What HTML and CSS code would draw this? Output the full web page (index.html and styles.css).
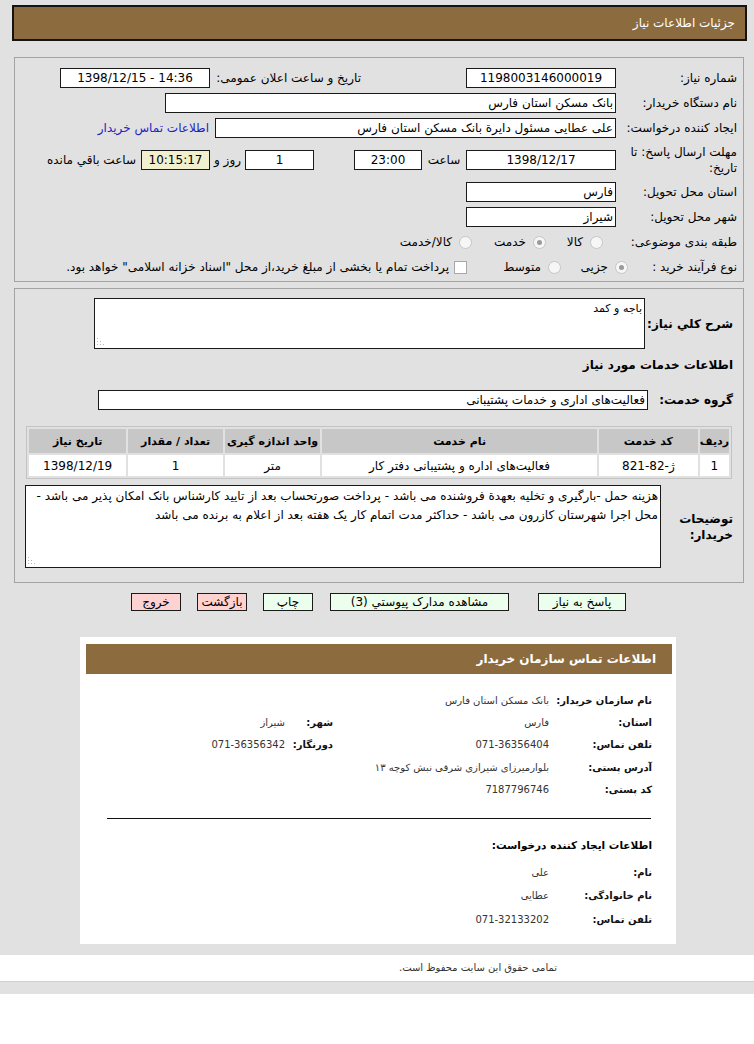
FILE: index.html
```html
<!DOCTYPE html>
<html lang="fa" dir="rtl">
<head>
<meta charset="utf-8">
<title>جزئیات اطلاعات نیاز</title>
<link rel="stylesheet" href="styles.css">
</head>
<body>
<div class="page">
  <div class="titlebar">جزئیات اطلاعات نیاز</div>

  <div class="panel p1">
    <div class="row">
      <span class="lbl">شماره نیاز:</span>
      <span class="box w150 c" dir="ltr">1198003146000019</span>
      <span class="lbl2">تاریخ و ساعت اعلان عمومی:</span>
      <span class="box w150 c" dir="ltr">1398/12/15 - 14:36</span>
    </div>
    <div class="row">
      <span class="lbl">نام دستگاه خریدار:</span>
      <span class="box w451">بانک مسکن استان فارس</span>
    </div>
    <div class="row">
      <span class="lbl">ایجاد کننده درخواست:</span>
      <span class="box w401">علی عطایی مسئول دایرة بانک مسکن استان فارس</span>
      <a class="link">اطلاعات تماس خریدار</a>
    </div>
    <div class="row tall">
      <span class="lbl wrap">مهلت ارسال پاسخ: تا تاریخ:</span>
      <span class="box w150 c" dir="ltr">1398/12/17</span>
      <span class="mid w44">ساعت</span>
      <span class="box w68 c" dir="ltr">23:00</span>
      <span class="gap40"></span>
      <span class="box w69 c">1</span>
      <span class="mid w35">روز و</span>
      <span class="box w69 c yellow" dir="ltr">10:15:17</span>
      <span class="remain">ساعت باقي مانده</span>
    </div>
    <div class="row">
      <span class="lbl">استان محل تحویل:</span>
      <span class="box w150">فارس</span>
    </div>
    <div class="row">
      <span class="lbl">شهر محل تحویل:</span>
      <span class="box w150">شیراز</span>
    </div>
    <div class="row opts">
      <span class="lbl">طبقه بندی موضوعی:</span>
      <span class="opt o1"><span class="radio"></span>کالا</span>
      <span class="opt o2"><span class="radio on"></span>خدمت</span>
      <span class="opt"><span class="radio"></span>کالا/خدمت</span>
    </div>
    <div class="row opts">
      <span class="lbl narrow">نوع فرآیند خرید :</span>
      <span class="opt o4"><span class="radio on"></span>جزیی</span>
      <span class="opt o5"><span class="radio"></span>متوسط</span>
      <span class="opt"><span class="check"></span>پرداخت تمام یا بخشی از مبلغ خرید،از محل "اسناد خزانه اسلامی" خواهد بود.</span>
    </div>
  </div>

  <div class="panel p2">
    <div class="row2 desc">
      <span class="blbl l88">شرح کلي نياز:</span>
      <div class="tawrap">
        <textarea class="ta ta1" readonly>باجه و کمد</textarea>
        <svg class="grip" width="8" height="8" viewBox="0 0 8 8"><rect x="0" y="6" width="1" height="1"/><rect x="3" y="6" width="1" height="1"/><rect x="6" y="6" width="1" height="1"/><rect x="0" y="3" width="1" height="1"/><rect x="3" y="3" width="1" height="1"/><rect x="0" y="0" width="1" height="1"/></svg>
      </div>
    </div>
    <div class="sect">اطلاعات خدمات مورد نیاز</div>
    <div class="row2 grp">
      <span class="blbl l85">گروه خدمت:</span>
      <span class="box w549">فعالیت‌های اداری و خدمات پشتیبانی</span>
    </div>
    <table class="items">
      <thead>
        <tr>
          <th class="c1">ردیف</th>
          <th class="c2">کد خدمت</th>
          <th class="c3">نام خدمت</th>
          <th class="c4">واحد اندازه گیری</th>
          <th class="c5">تعداد / مقدار</th>
          <th class="c6">تاریخ نیاز</th>
        </tr>
      </thead>
      <tbody>
        <tr>
          <td>1</td>
          <td>ژ-82-821</td>
          <td>فعالیت‌های اداره و پشتیبانی دفتر کار</td>
          <td>متر</td>
          <td>1</td>
          <td>1398/12/19</td>
        </tr>
      </tbody>
    </table>
    <div class="row2 notes">
      <span class="blbl l72">توضیحات خریدار:</span>
      <div class="tawrap">
        <textarea class="ta ta2" readonly>هزینه حمل -بارگیری و تخلیه بعهدة فروشنده می باشد - پرداخت صورتحساب بعد از تایید کارشناس بانک امکان پذیر می باشد - محل اجرا شهرستان کازرون می باشد - حداکثر مدت اتمام کار یک هفته بعد از اعلام به برنده می باشد</textarea>
        <svg class="grip" width="8" height="8" viewBox="0 0 8 8"><rect x="0" y="6" width="1" height="1"/><rect x="3" y="6" width="1" height="1"/><rect x="6" y="6" width="1" height="1"/><rect x="0" y="3" width="1" height="1"/><rect x="3" y="3" width="1" height="1"/><rect x="0" y="0" width="1" height="1"/></svg>
      </div>
    </div>
  </div>

  <div class="buttons">
    <span class="btn green b1">پاسخ به نیاز</span>
    <span class="btn green b2">مشاهده مدارک پیوستي (3)</span>
    <span class="btn green b3">چاپ</span>
    <span class="btn pink b3">بازگشت</span>
    <span class="btn pink b3">خروج</span>
  </div>

  <div class="card">
    <div class="cardhead">اطلاعات تماس سازمان خریدار</div>
    <div class="info">
      <span class="k">نام سازمان خریدار:</span><span class="v span3">بانک مسکن استان فارس</span>
      <span class="k">استان:</span><span class="v">فارس</span><span class="k">شهر:</span><span class="v">شیراز</span>
      <span class="k">تلفن تماس:</span><span class="v">071-36356404</span><span class="k">دورنگار:</span><span class="v">071-36356342</span>
      <span class="k">آدرس پستی:</span><span class="v span3">بلوارمیرزای شیرازی شرقی نبش کوچه ۱۳</span>
      <span class="k">کد پستی:</span><span class="v span3">7187796746</span>
    </div>
    <div class="rule"></div>
    <div class="subttl">اطلاعات ایجاد کننده درخواست:</div>
    <div class="info info2">
      <span class="k">نام:</span><span class="v span3">علی</span>
      <span class="k">نام خانوادگی:</span><span class="v span3">عطایی</span>
      <span class="k">تلفن تماس:</span><span class="v span3">071-32133202</span>
    </div>
  </div>
</div>
<div class="footer"><span>تمامی حقوق این سایت محفوظ است.</span></div>
<div class="band"></div>
</body>
</html>
```

FILE: styles.css
```css
html { background: #ffffff; }
body {
  margin: 0;
  direction: rtl;
  font-family: Tahoma, "DejaVu Sans", sans-serif;
  font-size: 12px;
  color: #000;
}
.page {
  background: #e1e1e1;
  padding: 5px 7px 11px 12px;
}
.titlebar {
  height: 36px;
  box-sizing: border-box;
  border: 2px solid #141414;
  background: #8c6c3f;
  color: #fff;
  font-size: 12px;
  line-height: 32px;
  padding-right: 10px;
}
.panel {
  border: 1px solid #a3a3a3;
  margin: 0 3px 0 2px;
}
.p1 {
  margin-top: 16px;
  height: 225px;
  box-sizing: border-box;
  padding: 8px 6px 0 0;
}
.row {
  display: flex;
  align-items: center;
  height: 24px;
  margin-bottom: 1px;
  white-space: nowrap;
}
.row.tall { height: 33px; margin-bottom: 4px; margin-top: 3px; }
.row.opts { height: 24px; }
.lbl { width: 121px; flex: none; }
.lbl.narrow { width: 109px; }
.lbl.wrap { white-space: normal; line-height: 16px; padding-left: 2px; box-sizing: border-box; }
.lbl2 { width: 151px; flex: none; padding-right: 105px; box-sizing: content-box; }
.box {
  flex: none;
  height: 20px;
  box-sizing: border-box;
  border: 1px solid #1a1a1a;
  background: #fff;
  line-height: 18px;
  padding: 0 2px;
  overflow: hidden;
  font-size: 12px;
}
.box.c { text-align: center; }
.w150 { width: 150px; }
.w451 { width: 451px; }
.w401 { width: 401px; }
.w68 { width: 68px; }
.w69 { width: 69px; }
.w549 { width: 550px; }
.yellow { background: #f2efcf; }
.mid { flex: none; text-align: center; }
.w44 { width: 44px; }
.w35 { width: 35px; }
.gap40 { width: 40px; flex: none; }
.remain { margin-right: 5px; }
.link { color: #2323c4; margin-right: 6px; text-decoration: none; }
.opt { display: flex; align-items: center; flex: none; }
.o1 { margin-right: 13px; width: 57px; }
.o2 { width: 74px; }
.o4 { width: 67px; }
.o5 { width: 94px; }
.radio {
  width: 11px;
  height: 11px;
  border: 1px solid #c6c6c6;
  border-radius: 50%;
  background: #f6f6f6;
  margin-left: 7px;
  position: relative;
  flex: none;
}
.radio.on::after {
  content: "";
  position: absolute;
  left: 3px; top: 3px;
  width: 5px; height: 5px;
  border-radius: 50%;
  background: #9a9a9a;
}
.check {
  width: 11px;
  height: 11px;
  border: 1px solid #a8a8a8;
  background: #fff;
  margin-left: 5px;
  flex: none;
}

.p2 {
  margin-top: 6px;
  height: 295px;
  box-sizing: border-box;
  padding: 9px 10px 0 11px;
}
.row2 { display: flex; align-items: center; }
.blbl { font-weight: bold; font-size: 12px; flex: none; }
.l88 { width: 88px; }
.l85 { width: 85px; }
.l72 { width: 72px; line-height: 16px; white-space: normal; }
.tawrap { position: relative; display: flex; }
.grip {
  position: absolute;
  left: 3px;
  bottom: 3px;
  fill: #b4b4b4;
}
.ta {
  direction: rtl;
  font-family: Tahoma, "DejaVu Sans", sans-serif;
  font-size: 11px;
  border: 1px solid #1a1a1a;
  background: #fff;
  box-sizing: border-box;
  padding: 1px 2px;
  margin: 0;
  resize: none;
  outline: none;
  line-height: 17px;
}
.ta1 { width: 551px; height: 51px; }
.sect { font-weight: bold; font-size: 12px; margin-top: 8px; height: 16px; line-height: 16px; }
.grp { margin-top: 17px; }
.items {
  margin: 16px 1px 0 0;
  width: 706px;
  border: 1px solid #c3c3c3;
  border-spacing: 2px;
  font-size: 12px;
  text-align: center;
  background: #e1e1e1;
}
.items th {
  background: #c7c7c7;
  height: 24px;
  padding: 0;
  font-weight: bold;
  font-size: 11px;
}
.items td { background: #fff; height: 21px; padding: 0; }
.c1 { width: 27px; }
.c2 { width: 100px; }
.c3 { width: 280px; }
.c4 { width: 97px; }
.c5 { width: 96px; }
.c6 { width: 98px; }
.notes { margin-top: 6px; }
.ta2 { width: 636px; height: 83px; font-size: 12px; line-height: 19px; }

.buttons {
  display: flex;
  margin-top: 10px;
  padding-right: 121px;
  height: 18px;
}
.btn {
  height: 18px;
  box-sizing: border-box;
  border: 1px solid #1a1a1a;
  font-size: 12px;
  line-height: 16px;
  text-align: center;
  white-space: nowrap;
}
.green { background: #ecffec; }
.pink { background: #ffd2d2; }
.b1 { width: 88px; margin-left: 29px; }
.b2 { width: 179px; margin-left: 17px; }
.b3 { width: 50px; margin-left: 16px; }

.card {
  background: #fff;
  margin: 26px 71px 0 68px;
  padding: 7px 4px 13px 6px;
}
.cardhead {
  background: #8c6c3f;
  color: #fff;
  height: 30px;
  line-height: 30px;
  font-weight: bold;
  font-size: 12px;
  padding-right: 16px;
}
.info {
  display: grid;
  grid-template-columns: 103px 216px 48px 1fr;
  grid-auto-rows: 22.3px;
  align-items: center;
  margin: 15px 20px 0 0;
}
.k { font-weight: bold; font-size: 10px; color: #111; white-space: nowrap; }
.v { font-size: 10px; color: #333; white-space: nowrap; }
.span3 { grid-column: span 3; }
.rule {
  height: 1px;
  background: #111;
  margin: 18px 21px 0 21px;
}
.subttl {
  font-weight: bold;
  font-size: 10.5px;
  margin: 17px 20px 0 0;
  height: 18px;
  line-height: 18px;
}
.info2 { grid-auto-rows: 23.5px; margin-top: 6px; }

.footer {
  height: 26px;
  border-bottom: 1px solid #cfcfcf;
  font-size: 10px;
  color: #333;
  line-height: 26px;
  padding-right: 197px;
}
.band { height: 12px; background: #e1e1e1; }
```
